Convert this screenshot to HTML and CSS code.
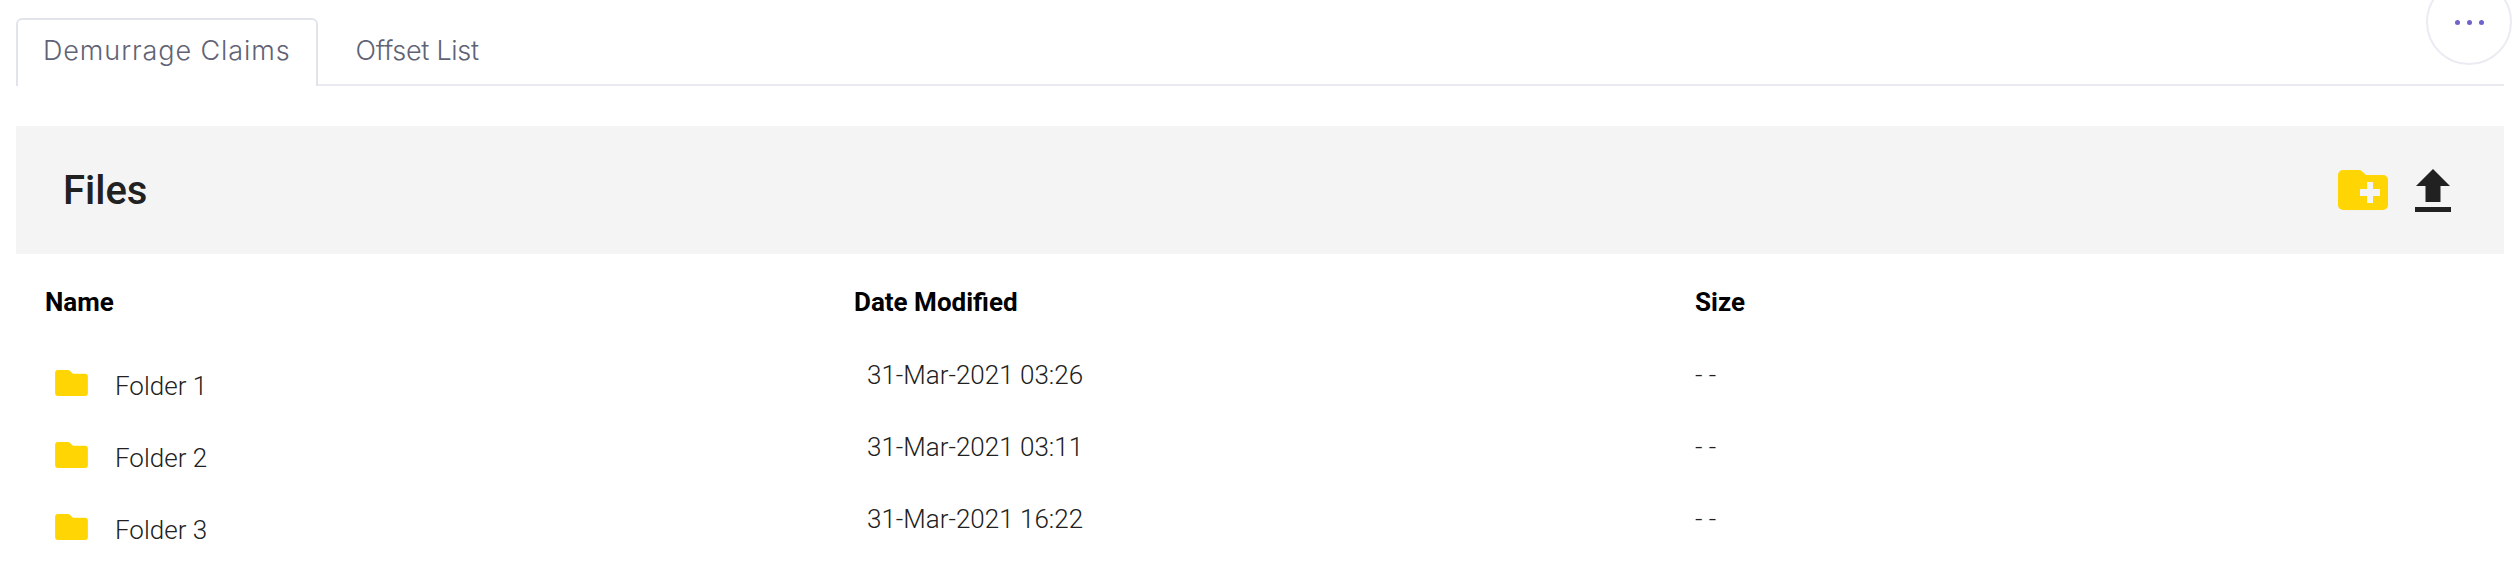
FILE: index.html
```html
<!DOCTYPE html>
<html lang="en">
<head>
    <meta charset="UTF-8">
    <title>Files</title>
    <link rel="stylesheet" href="styles.css">
</head>
<body>

    <!-- Tabs -->
    <div class="tabs">
        <a href="#" class="tab tab-active">Demurrage Claims</a>
        <a href="#" class="tab">Offset List</a>
    </div>

    <!-- Round menu button, cut by the top of the window -->
    <button class="more-btn" aria-label="More">
        <span class="dot"></span><span class="dot"></span><span class="dot"></span>
    </button>

    <!-- Files header -->
    <div class="files-header">
        <h2>Files</h2>
        <div class="files-actions">
            <svg class="icon-new-folder" viewBox="0 0 50 40" width="50" height="40">
                <path fill="#ffd504" d="M5 0h16.500a3 3 0 0 1 2.100.900L28 5h17a5 5 0 0 1 5 5v25a5 5 0 0 1-5 5H5a5 5 0 0 1-5-5V5a5 5 0 0 1 5-5z"/>
                <path fill="#f4f4f4" d="M29 12h6v7h7v7h-7v7h-6v-7h-7v-7h7z"/>
            </svg>
            <svg class="icon-upload" viewBox="0 0 36 43" width="36" height="43">
                <path fill="#212121" d="M18 0L35 17H25.500V33H10.500V17H1zM0 38H36V43H0z"/>
            </svg>
        </div>
    </div>

    <!-- Files table -->
    <div class="file-table">
        <div class="file-row file-head">
            <div class="col-name">Name</div>
            <div class="col-date">Date Modified</div>
            <div class="col-size">Size</div>
        </div>

        <div class="file-row">
            <div class="col-name">
                <svg class="icon-folder" viewBox="0 0 34 27" width="33" height="26"><path fill="#ffd504" d="M3 0h10.500a2 2 0 0 1 1.400.600L18.500 4H31a3 3 0 0 1 3 3v17a3 3 0 0 1-3 3H3a3 3 0 0 1-3-3V3a3 3 0 0 1 3-3z"/></svg>
                <span>Folder 1</span>
            </div>
            <div class="col-date">31-Mar-2021 03:26</div>
            <div class="col-size">- -</div>
        </div>

        <div class="file-row">
            <div class="col-name">
                <svg class="icon-folder" viewBox="0 0 34 27" width="33" height="26"><path fill="#ffd504" d="M3 0h10.500a2 2 0 0 1 1.400.600L18.500 4H31a3 3 0 0 1 3 3v17a3 3 0 0 1-3 3H3a3 3 0 0 1-3-3V3a3 3 0 0 1 3-3z"/></svg>
                <span>Folder 2</span>
            </div>
            <div class="col-date">31-Mar-2021 03:11</div>
            <div class="col-size">- -</div>
        </div>

        <div class="file-row">
            <div class="col-name">
                <svg class="icon-folder" viewBox="0 0 34 27" width="33" height="26"><path fill="#ffd504" d="M3 0h10.500a2 2 0 0 1 1.400.600L18.500 4H31a3 3 0 0 1 3 3v17a3 3 0 0 1-3 3H3a3 3 0 0 1-3-3V3a3 3 0 0 1 3-3z"/></svg>
                <span>Folder 3</span>
            </div>
            <div class="col-date">31-Mar-2021 16:22</div>
            <div class="col-size">- -</div>
        </div>
    </div>

</body>
</html>
```

FILE: styles.css
```css
body {
    font-family: Roboto, Arial, sans-serif;
    background-color: #fff;
    margin: 0;
    padding: 18px 16px 0 16px;
    height: 550px;
    overflow: hidden;
}

.tabs {
    display: flex;
    height: 66px;
    border-bottom: 2px solid #e9e9ef;
}

.tab {
    padding: 0 25px;
    font-family: Inter, Arial, sans-serif;
    font-size: 27px;
    font-weight: 300;
    letter-spacing: 0.9px;
    line-height: 62px;
    color: #5f6375;
    text-decoration: none;
    border: 2px solid transparent;
    border-bottom: none;
    border-radius: 6px 6px 0 0;
    margin-bottom: -2px;
}

.tab + .tab {
    margin-left: 11px;
    letter-spacing: -0.3px;
}

.tab-active {
    border-color: #e1e5ea;
    background-color: #fff;
}

.more-btn {
    position: absolute;
    left: 2426px;
    top: -21px;
    width: 86px;
    height: 86px;
    border: 2px solid #ecebf3;
    border-radius: 50%;
    background-color: #fff;
    display: flex;
    justify-content: center;
    align-items: center;
    gap: 7px;
    padding: 0;
}

.dot {
    width: 5px;
    height: 5px;
    border-radius: 50%;
    background-color: #6f63cf;
}

.files-header {
    margin-top: 40px;
    height: 128px;
    background-color: #f4f4f4;
    display: flex;
    justify-content: space-between;
    align-items: center;
    padding: 0 53px 0 47px;
}

.files-header h2 {
    margin: 0;
    font-size: 40px;
    font-weight: 500;
    color: #212121;
}

.files-actions {
    display: flex;
    align-items: center;
    gap: 27px;
}

.file-table {
    padding-top: 33px;
}

.file-row {
    display: grid;
    grid-template-columns: 838px 841px 1fr;
    height: 72px;
    font-size: 26px;
    line-height: 30px;
    font-weight: 300;
    color: #212121;
}

.file-row.file-head {
    height: 73px;
    font-weight: 700;
    color: #000;
}

.file-head .col-name {
    padding-left: 29px;
}

.file-head .col-date {
    padding-left: 0;
}

.col-name {
    padding-left: 39px;
    display: flex;
    gap: 27px;
}

.col-name span {
    padding-top: 11px;
}

.icon-folder {
    margin-top: 10px;
}

.col-date {
    padding-left: 13px;
}
```
